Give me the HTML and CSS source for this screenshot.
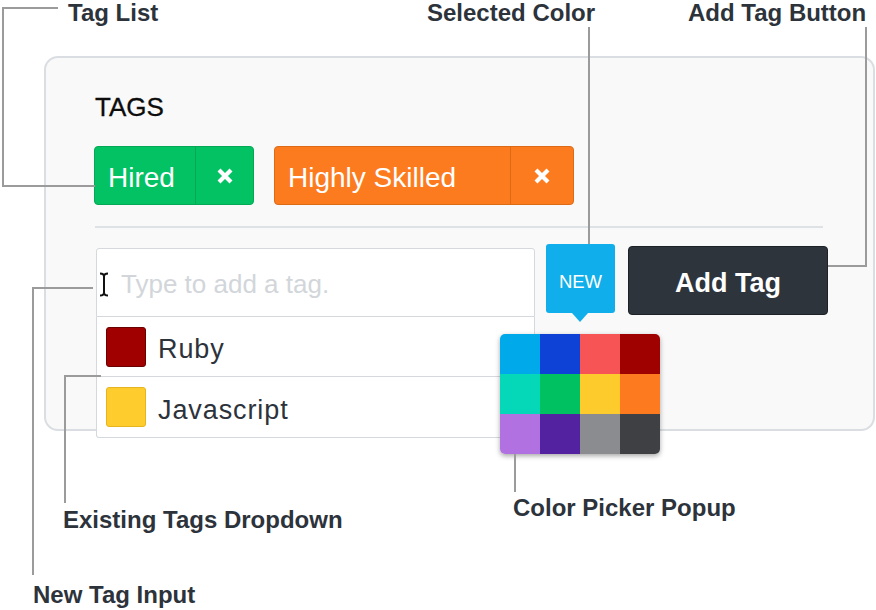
FILE: index.html
```html
<!DOCTYPE html>
<html lang="en">
<head>
<meta charset="utf-8">
<title>Tags widget</title>
<link rel="stylesheet" href="styles.css">
</head>
<body>
<div class="stage">
  <section class="panel">
    <h2 class="title">TAGS</h2>
    <div class="tags">
      <div class="tag tag--green tag--hired">
        <span class="tag-label">Hired</span>
        <span class="tag-close"><svg class="x-icon" viewBox="0 0 16 16" width="16" height="16"><path d="M2 2L14 14M14 2L2 14"/></svg></span>
      </div>
      <div class="tag tag--orange tag--skilled">
        <span class="tag-label">Highly Skilled</span>
        <span class="tag-close"><svg class="x-icon" viewBox="0 0 16 16" width="16" height="16"><path d="M2 2L14 14M14 2L2 14"/></svg></span>
      </div>
    </div>
    <div class="divider"></div>
    <div class="composer">
      <div class="combo">
        <div class="field">
          <svg class="ibeam" viewBox="0 0 10 25" width="10" height="25"><path d="M1 1.5Q5 1.5 5 4.5Q5 1.5 9 1.5M5 4.5V20.5M1 23.5Q5 23.5 5 20.5Q5 23.5 9 23.5"/></svg>
          <span class="placeholder">Type to add a tag.</span>
        </div>
        <ul class="options">
          <li class="option"><span class="swatch swatch--ruby"></span><span class="option-text">Ruby</span></li>
          <li class="option option--last"><span class="swatch swatch--js"></span><span class="option-text">Javascript</span></li>
        </ul>
      </div>
      <div class="badge">
        <span class="badge-text">NEW</span>
        <div class="picker">
          <span class="cell c1"></span><span class="cell c2"></span><span class="cell c3"></span><span class="cell c4"></span>
          <span class="cell c5"></span><span class="cell c6"></span><span class="cell c7"></span><span class="cell c8"></span>
          <span class="cell c9"></span><span class="cell c10"></span><span class="cell c11"></span><span class="cell c12"></span>
        </div>
      </div>
      <button class="add-btn"><span class="add-btn-text">Add Tag</span></button>
    </div>
  </section>

  <svg class="callouts" viewBox="0 0 876 610" width="876" height="610">
    <path d="M58 8H3V186H95"/>
    <path d="M589 27V244"/>
    <path d="M866 27V266H828"/>
    <path d="M93 288H33V575"/>
    <path d="M101 376H65V503"/>
    <path d="M515 454V492"/>
  </svg>
  <span class="note note--taglist">Tag List</span>
  <span class="note note--selected">Selected Color</span>
  <span class="note note--addbtn">Add Tag Button</span>
  <span class="note note--dropdown">Existing Tags Dropdown</span>
  <span class="note note--picker">Color Picker Popup</span>
  <span class="note note--input">New Tag Input</span>
</div>
</body>
</html>
```
FILE: styles.css
```css
html, body {
  margin: 0;
  background: #ffffff;
}

body {
  font-family: "Liberation Sans", Arial, sans-serif;
  color: #2d333b;
}

.stage {
  position: relative;
  width: 876px;
  height: 610px;
  overflow: hidden;
  padding-top: 56px;
  box-sizing: border-box;
}

/* ---------- panel ---------- */
.panel {
  margin-left: 44px;
  width: 831px;
  height: 375px;
  box-sizing: border-box;
  border: 2px solid #dadee2;
  border-radius: 14px;
  background: #f9f9f9;
  padding: 34px 45px 0 50px;
}

.title {
  margin: 0 0 0 -1px;
  font-size: 26px;
  line-height: 30px;
  font-weight: normal;
  color: #0d0d0d;
  -webkit-text-stroke: 0.3px #0d0d0d;
}

.tags {
  display: flex;
  gap: 20px;
  margin: 24px 0 0 -2px;
}

.tag {
  display: flex;
  height: 59px;
  box-sizing: border-box;
  border: 1px solid;
  border-radius: 4px;
  color: #ffffff;
  font-size: 28px;
}

.tag--green {
  background: #02c263;
  border-color: #05a854;
}

.tag--orange {
  background: #fd7b1f;
  border-color: #dd6a15;
}

.tag-label {
  display: flex;
  align-items: center;
  padding-left: 13px;
  box-sizing: border-box;
  padding-top: 5px;
}

.tag--hired .tag-label { width: 100px; }
.tag--skilled .tag-label { width: 235px; }

.tag-close {
  display: flex;
  align-items: center;
  justify-content: center;
  border-left: 1px solid;
  border-color: inherit;
}

.tag--hired .tag-close { width: 57px; }
.tag--skilled .tag-close { width: 62px; }

.x-icon path {
  fill: none;
  stroke: #ffffff;
  stroke-width: 4.2;
}

.divider {
  height: 2px;
  background: #dfe2e5;
  margin: 21px 5px 0 -1px;
}

/* ---------- composer ---------- */
.composer {
  display: flex;
  align-items: flex-start;
  margin-top: 16px;
}

.combo {
  width: 439px;
  margin-top: 4px;
}

.field {
  height: 69px;
  box-sizing: border-box;
  border: 1px solid #d5d9dd;
  border-radius: 3px 3px 0 0;
  background: #ffffff;
  display: flex;
  align-items: center;
  padding-left: 2px;
}

.ibeam {
  flex: none;
  margin-top: 3px;
}

.ibeam path {
  fill: none;
  stroke: #111111;
  stroke-width: 2;
}

.placeholder {
  margin-left: 12px;
  margin-top: 4px;
  font-size: 26px;
  color: #d2d6da;
}

.options {
  list-style: none;
  margin: 0;
  padding: 0;
}

.option {
  height: 60px;
  box-sizing: border-box;
  border: 1px solid #d5d9dd;
  border-top: none;
  background: #ffffff;
  display: flex;
  align-items: center;
  padding-left: 9px;
  font-size: 27px;
  color: #2d333b;
  letter-spacing: 0.9px;
}

.option-text {
  padding-top: 6px;
}

.option--last {
  height: 61px;
  border-radius: 0 0 3px 3px;
}

.swatch {
  width: 40px;
  height: 40px;
  box-sizing: border-box;
  border: 1.5px solid;
  border-radius: 3px;
  margin-right: 12px;
}

.swatch--ruby {
  background: #a00000;
  border-color: #6a0000;
}

.swatch--js {
  background: #fecd2d;
  border-color: #e6b41f;
}

/* ---------- badge + picker ---------- */
.badge {
  position: relative;
  width: 69px;
  height: 69px;
  margin-left: 11px;
  background: #10aeea;
  border-radius: 3px;
  display: flex;
  align-items: center;
  justify-content: center;
  color: #ffffff;
  font-size: 18.5px;
}

.badge-text {
  margin-top: 6px;
}

.badge::after {
  content: "";
  position: absolute;
  left: 26px;
  top: 69px;
  border-left: 8px solid transparent;
  border-right: 8px solid transparent;
  border-top: 9px solid #10aeea;
}

.picker {
  position: absolute;
  left: -46px;
  top: 90px;
  display: grid;
  grid-template-columns: repeat(4, 40px);
  grid-template-rows: repeat(3, 40px);
  border-radius: 5px;
  overflow: hidden;
  box-shadow: 0 2px 5px rgba(0, 0, 0, 0.35);
  z-index: 2;
}

.cell { display: block; }
.c1 { background: #00aaea; }
.c2 { background: #0e41d6; }
.c3 { background: #f75555; }
.c4 { background: #9f0000; }
.c5 { background: #04d8b8; }
.c6 { background: #00c161; }
.c7 { background: #fecb2d; }
.c8 { background: #fd7a1e; }
.c9 { background: #b171e1; }
.c10 { background: #5322a0; }
.c11 { background: #8b8c90; }
.c12 { background: #3f4043; }

.add-btn {
  width: 200px;
  height: 69px;
  margin: 2px 0 0 13px;
  padding: 0;
  box-sizing: border-box;
  border: 1px solid #1d2227;
  border-radius: 4px;
  background: #2e343c;
  color: #ffffff;
  font-family: "Liberation Sans", Arial, sans-serif;
  font-size: 27px;
  font-weight: bold;
}

.add-btn-text {
  display: inline-block;
  padding-top: 6px;
}

/* ---------- callouts ---------- */
.callouts {
  position: absolute;
  left: 0;
  top: 0;
  pointer-events: none;
  z-index: 3;
}

.callouts path {
  fill: none;
  stroke: #9b9b9b;
  stroke-width: 2;
}

.note {
  position: absolute;
  font-size: 24px;
  line-height: 24px;
  font-weight: bold;
  color: #2d333b;
  white-space: nowrap;
}

.note--taglist { left: 68px; top: 1px; }
.note--selected { left: 427px; top: 1px; }
.note--addbtn { left: 688px; top: 1px; }
.note--dropdown { left: 63px; top: 508px; }
.note--picker { left: 513px; top: 496px; }
.note--input { left: 33px; top: 583px; }
```
